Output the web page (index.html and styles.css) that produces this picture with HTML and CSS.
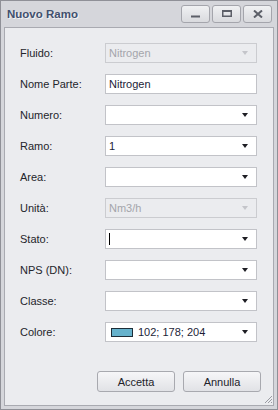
FILE: index.html
```html
<!DOCTYPE html>
<html>
<head>
    <title>Nuovo Ramo</title>
    <link rel="stylesheet" href="styles.css">
</head>
<body>
    <div class="window">
        <div class="titlebar">
            <span class="title">Nuovo Ramo</span>
            <div class="winbtns">
                <div class="winbtn">
                    <svg width="10" height="8" viewBox="0 0 10 8"><rect x="0" y="5.5" width="9" height="2" fill="#5c5f68"/></svg>
                </div>
                <div class="winbtn">
                    <svg width="10" height="8" viewBox="0 0 10 8"><rect x="0.75" y="0.75" width="8.5" height="5.5" fill="none" stroke="#5c5f68" stroke-width="1.5"/><rect x="0" y="0" width="10" height="2" fill="#5c5f68"/></svg>
                </div>
                <div class="winbtn">
                    <svg width="10" height="8" viewBox="0 0 10 8"><path d="M1 0.5 L9 7.5 M9 0.5 L1 7.5" stroke="#5c5f68" stroke-width="2"/></svg>
                </div>
            </div>
        </div>

        <div class="content">
            <div class="form">
                <label>Fluido:</label>
                <div class="field disabled"><span>Nitrogen</span><i class="arrow"></i></div>

                <label>Nome Parte:</label>
                <div class="field"><span>Nitrogen</span></div>

                <label>Numero:</label>
                <div class="field"><span></span><i class="arrow"></i></div>

                <label>Ramo:</label>
                <div class="field"><span>1</span><i class="arrow"></i></div>

                <label>Area:</label>
                <div class="field"><span></span><i class="arrow"></i></div>

                <label>Unità:</label>
                <div class="field disabled"><span>Nm3/h</span><i class="arrow"></i></div>

                <label>Stato:</label>
                <div class="field"><span class="caret"></span><i class="arrow"></i></div>

                <label>NPS (DN):</label>
                <div class="field"><span></span><i class="arrow"></i></div>

                <label>Classe:</label>
                <div class="field"><span></span><i class="arrow"></i></div>

                <label>Colore:</label>
                <div class="field"><span class="swatch" style="background: rgb(102, 178, 204)"></span><span>102; 178; 204</span><i class="arrow"></i></div>
            </div>

            <div class="buttons">
                <button type="button">Accetta</button>
                <button type="button">Annulla</button>
            </div>

            <svg class="grip" width="9" height="9" viewBox="0 0 9 9">
                <path d="M8 1 L1 8 M8 4 L4 8 M8 7 L7 8" stroke="#9a9ba2" stroke-width="1"/>
            </svg>
        </div>
    </div>
</body>
</html>
```

FILE: styles.css
```css
/* dialog window look */
body {
    margin: 0;
    font-family: "Liberation Sans", Arial, sans-serif;
    font-size: 11px;
}

.window {
    width: 278px;
    height: 410px;
    box-sizing: border-box;
    border: 1px solid #8f9097;
    background: #d5d6db;
    padding: 0 3px 3px 3px;
    display: flex;
    flex-direction: column;
}

.titlebar {
    height: 26px;
    display: flex;
    align-items: center;
    justify-content: space-between;
    flex-shrink: 0;
}

.title {
    font-weight: bold;
    font-size: 11.5px;
    color: #42506e;
    text-shadow: 1px 1px 0 #f2f3f6;
    margin-left: 3px;
    margin-top: -1px;
}

.winbtns {
    display: flex;
    gap: 2px;
    margin-right: 2px;
}

.winbtn {
    width: 27px;
    height: 16px;
    border: 1px solid #a4a5ac;
    border-radius: 3px;
    background: linear-gradient(#f0f1f3, #d9dade);
    display: flex;
    align-items: center;
    justify-content: center;
}

.content {
    position: relative;
    flex: 1;
    border: 1px solid #a9aab1;
    background: #ebecef;
    padding: 15px 15px 13px 15px;
    display: flex;
    flex-direction: column;
}

.form {
    display: grid;
    grid-template-columns: 85px 152px;
    grid-auto-rows: 20px;
    row-gap: 11px;
    align-items: center;
}

.form label {
    color: #24252b;
}

.field {
    height: 20px;
    box-sizing: border-box;
    border: 1px solid #c2c3c8;
    background: #fff;
    display: flex;
    align-items: center;
    padding: 0 0 0 3px;
    color: #1c1d38;
}

.field.disabled {
    background: #ebecef;
    border-color: #cbccd0;
    color: #a4a5ab;
}

.field span {
    flex: 1;
}

.arrow {
    width: 0;
    height: 0;
    border-left: 3.5px solid transparent;
    border-right: 3.5px solid transparent;
    border-top: 4px solid #1e1e24;
    margin-right: 8px;
}

.disabled .arrow {
    border-top-color: #c4c5ca;
}

.field .caret {
    flex: 0 0 1px;
    height: 12px;
    background: #000;
    margin-right: auto;
}

.field .swatch {
    flex: 0 0 auto;
    width: 20px;
    height: 7px;
    border: 1px solid #1d2d38;
    margin: 0 5px 0 2px;
}

.buttons {
    margin-top: auto;
    display: flex;
    justify-content: flex-end;
    gap: 8px;
    margin-right: -3px;
}

.buttons button {
    width: 78px;
    height: 21px;
    border: 1px solid #a8a9af;
    border-radius: 3px;
    background: linear-gradient(#f6f6f8, #e1e2e6);
    font-family: "Liberation Sans", Arial, sans-serif;
    font-size: 11px;
    color: #22232a;
    padding: 0;
}

.grip {
    position: absolute;
    right: 0;
    bottom: 1px;
}
```
